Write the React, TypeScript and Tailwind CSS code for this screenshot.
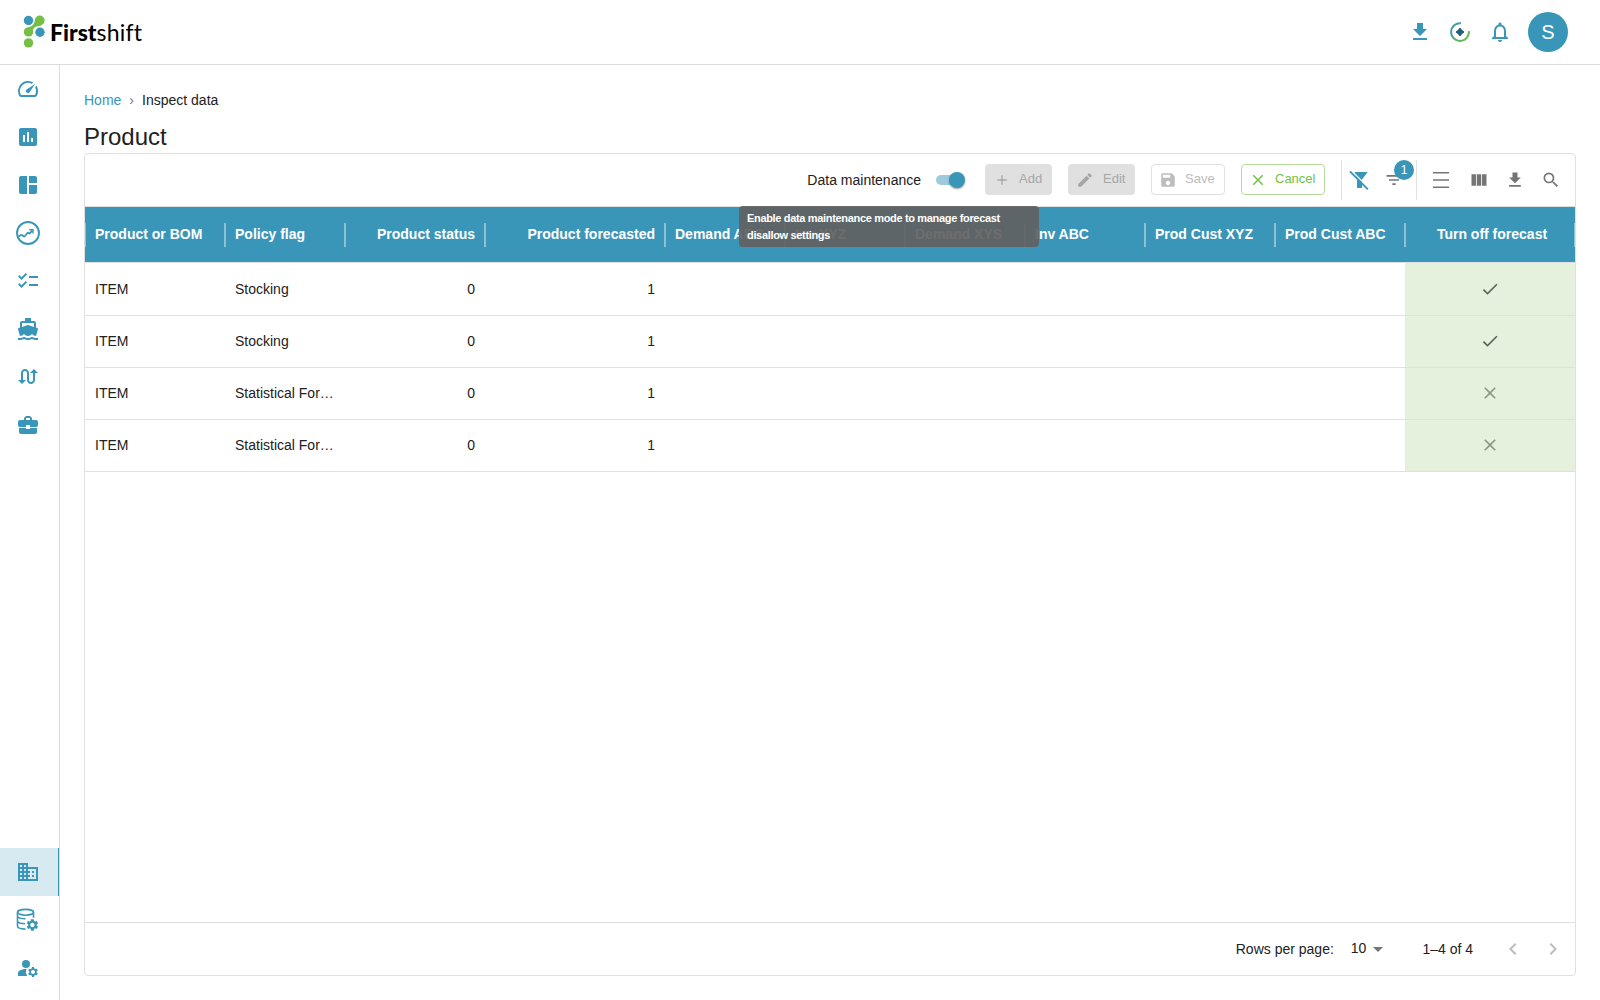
import React from 'react'
import {
  MdAdd,
  MdArrowDropDown,
  MdAssessment,
  MdBusiness,
  MdBusinessCenter,
  MdCheck,
  MdChecklist,
  MdChevronLeft,
  MdChevronRight,
  MdClose,
  MdDirectionsBoat,
  MdEdit,
  MdFilterList,
  MdManageAccounts,
  MdNotificationsNone,
  MdSave,
  MdSearch,
  MdSpaceDashboard,
  MdSpeed,
  MdSwapCalls,
  MdViewColumn,
} from 'react-icons/md'

const rows = [
  { item: 'ITEM', policy: 'Stocking', status: 0, forecasted: 1, off: true },
  { item: 'ITEM', policy: 'Stocking', status: 0, forecasted: 1, off: true },
  { item: 'ITEM', policy: 'Statistical For…', status: 0, forecasted: 1, off: false },
  { item: 'ITEM', policy: 'Statistical For…', status: 0, forecasted: 1, off: false },
]

const columns = [
  { label: 'Product or BOM', style: 'w-[140px]' },
  { label: 'Policy flag', style: 'w-[120px]' },
  { label: 'Product status', style: 'w-[140px] justify-end' },
  { label: 'Product forecasted', style: 'w-[180px] justify-end' },
  { label: 'Demand ABC', style: 'w-[120px]' },
  { label: 'Inv XYZ', style: 'w-[120px]' },
  { label: 'Demand XYS', style: 'w-[120px]' },
  { label: 'Inv ABC', style: 'w-[120px]' },
  { label: 'Prod Cust XYZ', style: 'w-[130px]' },
  { label: 'Prod Cust ABC', style: 'w-[130px]' },
  { label: 'Turn off forecast', style: 'w-[170px] justify-center pl-[14px]' },
]

function DownloadIcon({ size }: { size: number }) {
  return (
    <svg width={size} height={size} viewBox="0 0 24 24" fill="currentColor">
      <path d="M19 9h-4V3H9v6H5l7 7 7-7zM5 18v2h14v-2H5z" />
    </svg>
  )
}

function TrendIcon() {
  return (
    <svg width="24" height="24" viewBox="0 0 24 24" fill="none" stroke="currentColor">
      <circle cx="12" cy="12" r="11" strokeWidth="1.9" />
      <path d="M2.300 15.700L5 14.100Q5.700 13.700 6.400 14.300L7.500 15.200Q8.300 15.800 9 15L11.400 12Q12 11.300 12.600 11.900L13 12.300Q13.500 12.800 14 12.200L16.300 9.600" strokeWidth="1.800" />
      <path d="M13.200 8.700h3.800v3.800" strokeWidth="1.400" />
    </svg>
  )
}

function DatabaseGearIcon() {
  return (
    <svg width="24" height="24" viewBox="0 0 24 24" fill="none" stroke="currentColor" strokeWidth="1.600">
      <ellipse cx="9.500" cy="4.300" rx="8" ry="2.900" />
      <path d="M1.500 4.300v14c0 1.700 3.200 2.700 8 2.800M17.500 4.300v5.500M1.500 8.500c.7 1.700 3.500 2.300 8 2.300M1.500 13.300c.7 1.700 3.500 2.400 7.600 2.400" />
      <g transform="translate(9.200 9.700) scale(0.600)" fill="currentColor" stroke="none">
        <path d="M19.140 12.940c.04-.3.060-.61.060-.94 0-.32-.02-.64-.07-.94l2.030-1.580c.18-.14.23-.41.120-.61l-1.920-3.320c-.12-.22-.37-.29-.59-.22l-2.390.96c-.5-.38-1.030-.7-1.620-.94l-.36-2.540c-.04-.24-.24-.41-.48-.41h-3.840c-.24 0-.43.17-.47.41l-.36 2.540c-.59.24-1.130.57-1.620.94l-2.390-.96c-.22-.08-.47 0-.59.22L2.740 8.870c-.12.21-.08.47.12.61l2.030 1.580c-.05.3-.09.63-.09.94s.02.64.07.94l-2.030 1.580c-.18.14-.23.41-.12.61l1.920 3.320c.12.22.37.29.59.22l2.390-.96c.5.38 1.030.7 1.620.94l.36 2.540c.05.24.24.41.48.41h3.840c.24 0 .44-.17.47-.41l.36-2.540c.59-.24 1.130-.56 1.620-.94l2.390.96c.22.08.47 0 .59-.22l1.920-3.320c.12-.22.07-.47-.12-.61l-2.010-1.580zM12 15.600c-1.980 0-3.600-1.620-3.600-3.600s1.620-3.600 3.600-3.600 3.600 1.620 3.600 3.600-1.620 3.600-3.600 3.600z" />
      </g>
    </svg>
  )
}

function Logo() {
  return (
    <div className="flex items-center">
      <svg width="22" height="34" viewBox="0 0 22 34">
        <path d="M5 12.200C9 11.500 11 10 12 5l8 2c-1 3.500-3 4-6 4.500-3.500.7-4.500 3-4.500 6z" fill="#74bf44" />
        <circle cx="5.500" cy="5.500" r="4.700" fill="#3996b8" />
        <circle cx="16.700" cy="5.500" r="4.900" fill="#74bf44" />
        <circle cx="5.500" cy="16.900" r="4.700" fill="#74bf44" />
        <circle cx="17" cy="17.300" r="4.700" fill="#3996b8" />
        <circle cx="5.500" cy="27.900" r="4.700" fill="#74bf44" />
      </svg>
      <div className="ml-[5px] flex font-['Lato',sans-serif] text-[23px] leading-[28px] text-black">
        <span className="font-black">First</span>
        <span className="font-normal tracking-[0.2px]">shift</span>
      </div>
    </div>
  )
}

function Header() {
  return (
    <header className="flex h-[65px] shrink-0 items-center justify-between border-b border-[#dcdcdc] pr-8 pl-[23px] text-[#3996b8]">
      <Logo />
      <div className="flex items-center">
        <DownloadIcon size={24} />
        <svg className="ml-4" width="24" height="24" viewBox="0 0 24 24" fill="none">
          <defs>
            <linearGradient id="ring" x1="3" y1="5" x2="20" y2="20" gradientUnits="userSpaceOnUse">
              <stop stopColor="#3996b8" />
              <stop offset="1" stopColor="#74bf44" />
            </linearGradient>
          </defs>
          <path d="M13 3.200A8.900 8.900 0 1 0 20.900 11.200" stroke="url(#ring)" strokeWidth="2" />
          <path d="M12 8Q13.400 10.600 16 12 13.400 13.400 12 16 10.600 13.400 8 12 10.600 10.600 12 8z" fill="#1e607a" stroke="#1e607a" strokeWidth="1" />
        </svg>
        <MdNotificationsNone className="ml-4" size={24} />
        <div className="ml-4 flex h-10 w-10 items-center justify-center rounded-full bg-[#3996b8] text-[20px] text-white">S</div>
      </div>
    </header>
  )
}

function NavItem({ children, active }: { children: React.ReactNode; active?: boolean }) {
  return (
    <div className={active ? 'flex h-12 items-center border-r border-[#3996b8] bg-[#d7eaf1] pl-4' : 'flex h-12 items-center pl-4'}>
      {children}
    </div>
  )
}

function Sidebar() {
  return (
    <nav className="flex w-[60px] shrink-0 flex-col justify-between border-r border-[#dcdcdc] pb-2 text-[#3996b8]">
      <div>
        <NavItem><MdSpeed size={24} /></NavItem>
        <NavItem><MdAssessment size={24} /></NavItem>
        <NavItem><MdSpaceDashboard size={24} /></NavItem>
        <NavItem><TrendIcon /></NavItem>
        <NavItem><MdChecklist size={24} /></NavItem>
        <NavItem><MdDirectionsBoat size={24} /></NavItem>
        <NavItem><MdSwapCalls size={24} /></NavItem>
        <NavItem><MdBusinessCenter size={24} /></NavItem>
      </div>
      <div>
        <NavItem active><MdBusiness size={24} /></NavItem>
        <NavItem><DatabaseGearIcon /></NavItem>
        <NavItem><MdManageAccounts size={24} /></NavItem>
      </div>
    </nav>
  )
}

function Toolbar() {
  return (
    <div className="flex h-[53px] shrink-0 items-center justify-end border-b border-[#e0e0e0] pr-[14px] text-[#757575]">
      <span className="text-[14px] text-[#212121]">Data maintenance</span>
      <div className="ml-[15px] flex h-5 w-[30px] items-center">
        <div className="flex h-[10px] w-[26px] items-center rounded-full bg-[#9ccbdc]">
          <div className="ml-[13px] h-4 w-4 shrink-0 rounded-full bg-[#3996b8] shadow-[0_1px_2px_rgba(0,0,0,0.4)]" />
        </div>
      </div>
      <div className="mb-px ml-[19px] flex h-[31px] w-[67px] items-center rounded bg-[#e0e0e0] pt-px pl-[9px] text-[13px] text-[#a6a6a6]">
        <MdAdd size={16} />
        <span className="mb-[3px] ml-[9px]">Add</span>
      </div>
      <div className="mb-px ml-4 flex h-[31px] w-[67px] items-center rounded bg-[#e0e0e0] pt-px pl-[8px] text-[13px] text-[#a6a6a6]">
        <MdEdit size={18} />
        <span className="mb-[3px] ml-[9px]">Edit</span>
      </div>
      <div className="mb-px ml-4 flex h-[31px] w-[74px] items-center rounded border border-[#e0e0e0] pt-px pl-[7px] text-[13px] text-[#bdbdbd]">
        <MdSave size={18} />
        <span className="mb-[3px] ml-[8px]">Save</span>
      </div>
      <div className="mb-px ml-4 flex h-[31px] w-[84px] items-center rounded border border-[#b5dc9b] pt-px pl-[7px] text-[13px] text-[#74bf44]">
        <MdClose size={18} />
        <span className="mb-[3px] ml-[8px]">Cancel</span>
      </div>
      <div className="ml-4 flex h-10 w-[76px] items-center border-x border-[#e0e0e0]">
        <svg className="ml-[7px] text-[#3996b8]" width="20" height="20" viewBox="0 0 20 20" fill="currentColor">
          <path d="M5.500 2h13.200l-5.700 7.500V18H8V9.500z" />
          <path d="M2.500 .8l17 17" stroke="#fff" strokeWidth="1.500" />
          <path d="M.9 1.300l18 18" stroke="currentColor" strokeWidth="1.800" />
        </svg>
        <div className="relative ml-[15px]">
          <MdFilterList size={20} />
          <span className="absolute -top-[10px] left-[10px] flex h-5 w-5 items-center justify-center rounded-full bg-[#3996b8] text-[12px] text-white">1</span>
        </div>
      </div>
      <svg className="ml-4" width="16" height="16" viewBox="0 0 16 16" fill="currentColor">
        <path d="M0 0h16v1.500H0zM0 7.200h16v1.500H0zM0 14.400h16v1.500H0z" />
      </svg>
      <MdViewColumn className="ml-5" size={20} />
      <div className="ml-4"><DownloadIcon size={20} /></div>
      <MdSearch className="ml-4" size={20} />
    </div>
  )
}

function Grid() {
  return (
    <div className="flex flex-1 flex-col">
      <div className="flex h-[56px] shrink-0 border-b border-[#e0e0e0] bg-[#3996b8] text-[14px] font-bold text-white">
        <div className="-mr-px h-6 w-px self-center bg-[#8fc1d3]" />
        {columns.map((c) => (
          <div key={c.label} className="flex items-center">
            <div className={`flex px-[10px] ${c.style}`}>{c.label}</div>
            <div className="-mr-px -ml-px h-6 w-[2px] bg-[#8fc1d3]" />
          </div>
        ))}
      </div>
      {rows.map((r, i) => (
        <div key={i} className="flex h-[52px] items-center border-b border-[#e0e0e0] text-[14px] text-[#212121] nth-2:h-[53px]">
          <div className="w-[140px] px-[10px]">{r.item}</div>
          <div className="w-[120px] px-[10px] whitespace-nowrap">{r.policy}</div>
          <div className="w-[140px] px-[10px] text-right">{r.status}</div>
          <div className="w-[180px] px-[10px] text-right">{r.forecasted}</div>
          <div className="flex-1" />
          <div className="flex w-[170px] items-center justify-center self-stretch bg-[#e5f1dc] pb-px">
            {r.off ? <MdCheck size={20} className="text-[#5b6058]" /> : <MdClose size={20} className="text-[#8e9689]" />}
          </div>
        </div>
      ))}
    </div>
  )
}

function Pagination() {
  return (
    <div className="flex h-[53px] shrink-0 items-center justify-end border-t border-[#e0e0e0] pr-[10px] text-[14px] text-[#212121]">
      <span>Rows per page:</span>
      <span className="mb-[2px] ml-[17px]">10</span>
      <MdArrowDropDown className="text-[#757575]" size={24} />
      <span className="ml-8">1–4 of 4</span>
      <MdChevronLeft className="ml-[28px] text-[#bdbdbd]" size={24} />
      <MdChevronRight className="ml-4 text-[#bdbdbd]" size={24} />
    </div>
  )
}

function App() {
  return (
    <div className="flex h-[1000px] w-[1600px] flex-col overflow-hidden bg-white font-['Liberation_Sans',Arial,sans-serif]">
      <Header />
      <div className="flex min-h-0 flex-1">
        <Sidebar />
        <main className="flex flex-1 flex-col pt-[25px] pr-6 pb-6 pl-6">
          <div className="flex h-5 items-center text-[14px] text-[#212121]">
            <span className="text-[#3996b8]">Home</span>
            <span className="mx-2 text-[#757575]">›</span>
            <span>Inspect data</span>
          </div>
          <h1 className="mt-[11px] h-8 text-[24px] leading-8 text-[#212121]">Product</h1>
          <section className="relative flex min-h-0 flex-1 flex-col overflow-hidden rounded border border-[#e0e0e0]">
            <Toolbar />
            <Grid />
            <Pagination />
            <div className="absolute top-[52px] left-[654px] w-[300px] rounded bg-[rgba(97,97,97,0.92)] px-2 py-1 text-[11px] leading-[16.5px] font-bold tracking-[-0.33px] text-white">
              Enable data maintenance mode to manage forecast<br />disallow settings
            </div>
          </section>
        </main>
      </div>
    </div>
  )
}

export default App
